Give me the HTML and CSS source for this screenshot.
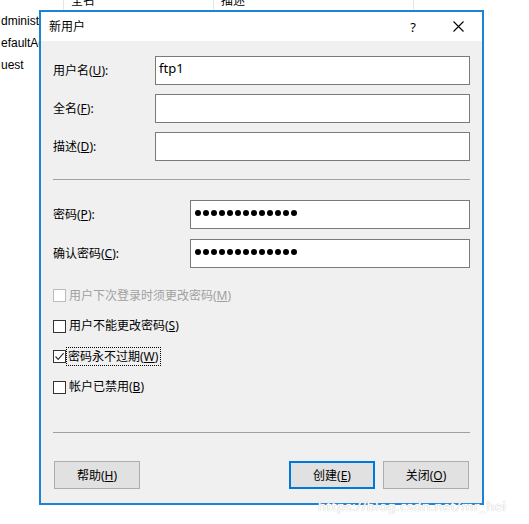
FILE: index.html
```html
<!DOCTYPE html>
<html lang="zh-CN">
<head>
<meta charset="UTF-8">
<meta name="viewport" content="width=device-width, initial-scale=1.0">
<title>新用户</title>
<link rel="stylesheet" href="styles.css">
</head>
<body>

  <div class="user-list">
    <div class="list-header">
      <div class="col col-name"></div>
      <div class="col col-full">全名</div>
      <div class="col col-desc">描述</div>
    </div>
    <div class="list-row">dministrator</div>
    <div class="list-row">efaultAccount</div>
    <div class="list-row">uest</div>
  </div>

  <div class="dialog">
    <div class="titlebar">
      <span class="title">新用户</span>
      <span class="help-btn">?</span>
      <span class="close-btn">
        <svg width="11" height="11" viewBox="0 0 11 11">
          <path d="M0.5 0.5 L10.5 10.5 M10.5 0.5 L0.5 10.5" stroke="#000" stroke-width="1.1" fill="none"/>
        </svg>
      </span>
    </div>

    <div class="dialog-body">
      <div class="fields">
        <label>用户名(<u>U</u>):</label>
        <div class="textbox">ftp1</div>
        <label>全名(<u>F</u>):</label>
        <div class="textbox"></div>
        <label>描述(<u>D</u>):</label>
        <div class="textbox"></div>
      </div>

      <div class="separator sep-top"></div>

      <div class="fields pw-fields">
        <label>密码(<u>P</u>):</label>
        <div class="textbox"><span class="dots"><i></i><i></i><i></i><i></i><i></i><i></i><i></i><i></i><i></i><i></i><i></i><i></i><i></i></span></div>
        <label>确认密码(<u>C</u>):</label>
        <div class="textbox"><span class="dots"><i></i><i></i><i></i><i></i><i></i><i></i><i></i><i></i><i></i><i></i><i></i><i></i><i></i></span></div>
      </div>

      <div class="checks">
        <div class="check disabled"><span class="box"></span><span class="text">用户下次登录时须更改密码(<u>M</u>)</span></div>
        <div class="check"><span class="box"></span><span class="text">用户不能更改密码(<u>S</u>)</span></div>
        <div class="check"><span class="box">
          <svg width="11" height="11" viewBox="0 0 11 11">
            <path d="M1.5 5.5 L4.2 8.3 L9.6 2.2" stroke="#333" stroke-width="1.2" fill="none"/>
          </svg></span><span class="text focused">密码永不过期(<u>W</u>)</span></div>
        <div class="check"><span class="box"></span><span class="text">帐户已禁用(<u>B</u>)</span></div>
      </div>

      <div class="separator sep-bottom"></div>

      <div class="button-row">
        <button>帮助(<u>H</u>)</button>
        <div class="right-buttons">
          <button class="default">创建(<u>E</u>)</button>
          <button>关闭(<u>O</u>)</button>
        </div>
      </div>
    </div>
  </div>

  <div class="watermark">https://blog.csdn.net/mr_hei</div>

</body>
</html>
```

FILE: styles.css
```css
* {
  box-sizing: border-box;
  margin: 0;
  padding: 0;
}

body {
  font-family: "Noto Sans", "Noto Sans CJK SC", sans-serif;
  font-size: 12px;
  color: #000;
  background-color: #fff;
  width: 529px;
  height: 524px;
  overflow: hidden;
  position: relative;
}

/* Background list */

.list-header {
  display: flex;
  height: 10px;
  overflow: hidden;
}

.list-header .col {
  height: 10px;
  line-height: 12px;
  padding-left: 7px;
  border-right: 1px solid #e5e5e5;
}

.list-header .col-name { width: 64px; }
.list-header .col-full { width: 150px; margin-top: -5px; height: 15px; }
.list-header .col-desc { width: 200px; margin-top: -5px; height: 15px; }

.list-row {
  width: 39px;
  height: 22px;
  line-height: 22px;
  padding-left: 1px;
  font-family: "Liberation Sans", sans-serif;
  font-size: 12px;
  white-space: nowrap;
  overflow: hidden;
}

.list-row:first-of-type { margin-top: 2px; }

/* Dialog */

.dialog {
  position: absolute;
  left: 39px;
  top: 10px;
  width: 445px;
  height: 495px;
  border: 2px solid #1c84d6;
  background-color: #f0f0f0;
}

.titlebar {
  display: flex;
  align-items: center;
  height: 29px;
  background-color: #fff;
  padding-left: 8px;
}

.title {
  flex: 1;
  font-size: 12px;
  line-height: 14px;
}

.help-btn {
  width: 46px;
  text-align: center;
  font-size: 13px;
}

.close-btn {
  width: 46px;
  display: flex;
  justify-content: center;
  align-items: center;
  padding-right: 2px;
}

.dialog-body {
  padding: 15px 12px 0 12px;
}

.fields {
  display: grid;
  grid-template-columns: 102px 1fr;
  grid-auto-rows: 29px;
  row-gap: 9px;
  align-items: center;
}

.pw-fields {
  grid-template-columns: 137px 1fr;
  row-gap: 10px;
  margin-top: 20px;
}

.fields label {
  line-height: 14px;
}

.textbox {
  height: 29px;
  background-color: #fff;
  border: 1px solid #7a7a7a;
  padding: 3px 0 0 3px;
  font-size: 13px;
  line-height: 16px;
}

.dots {
  display: flex;
  gap: 2px;
  padding: 6px 0 0 1px;
}

.dots i {
  display: block;
  width: 6px;
  height: 6px;
  border-radius: 50%;
  background-color: #000;
}

.separator {
  height: 1px;
  background-color: #a0a0a0;
}

.sep-top { margin-top: 18px; }

/* Checkboxes */

.checks {
  display: flex;
  flex-direction: column;
  gap: 17.5px;
  margin-top: 21px;
}

.check {
  display: flex;
  align-items: center;
  height: 13px;
}

.check .box {
  width: 13px;
  height: 13px;
  border: 1px solid #333;
  background-color: #fff;
  display: flex;
  align-items: center;
  justify-content: center;
  margin-right: 3px;
}

.check .text {
  line-height: 14px;
}

.check .focused {
  outline: 1px dotted #000;
  outline-offset: 1px;
  padding: 1px 1px 0 0;
  margin-left: -1px;
}

.check.disabled .box {
  border-color: #bcbcbc;
}

.check.disabled .text {
  color: #a0a0a0;
}

.sep-bottom { margin-top: 38px; }

/* Buttons */

.button-row {
  display: flex;
  justify-content: space-between;
  margin-top: 28px;
  padding: 0 1px 0 1px;
}

.right-buttons {
  display: flex;
  gap: 8px;
}

button {
  width: 86px;
  height: 28px;
  font-family: inherit;
  font-size: 12px;
  color: #000;
  background-color: #e1e1e1;
  border: 1px solid #adadad;
}

button.default {
  border: 2px solid #0078d7;
}

.watermark {
  position: absolute;
  left: 318px;
  top: 497px;
  font-size: 13px;
  color: #fff;
  text-shadow: 0 0 1px #c8c8c8, 0 0 1px #c8c8c8;
  letter-spacing: 0.5px;
}
```
